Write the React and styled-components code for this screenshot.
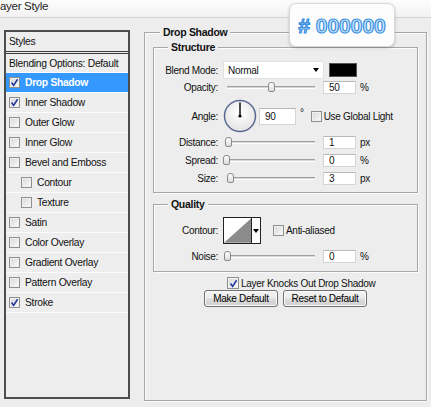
import React from 'react';
import styled, { createGlobalStyle } from 'styled-components';

const GlobalStyle = createGlobalStyle`
  * { box-sizing: border-box; }
  html, body { margin: 0; padding: 0; background: #ededed; }
  body {
    font-family: 'Liberation Sans', Arial, sans-serif;
    font-size: 10px;
    letter-spacing: -0.3px;
    color: #111;
  }
`;

const Window = styled.div`
  position: relative;
  width: 431px;
  height: 407px;
  overflow: hidden;
  background: #ededed;
`;

const TitleBar = styled.div`
  height: 18px;
  border-bottom: 1px solid #d2d2d2;
  background: linear-gradient(#fdfdfd, #f2f2f2);
  font-size: 11.5px;
  line-height: 13px;
  color: #1e1e1e;
`;

const Badge = styled.div`
  position: absolute;
  top: 3px;
  left: 289px;
  width: 106px;
  height: 44px;
  border: 1px solid #d9d9d9;
  border-radius: 7px;
  background: #fdfdfd;
  box-shadow: 0 1px 3px rgba(0, 0, 0, 0.22);
  display: flex;
  align-items: center;
  justify-content: center;
  font-size: 21px;
  font-weight: bold;
  letter-spacing: 0;
  color: #cde7fb;
  -webkit-text-stroke: 1.2px #3a8fe0;
  padding-top: 2px;
`;

const Body = styled.div`
  display: flex;
  align-items: flex-start;
  padding-left: 4px;
`;

const StylesPanel = styled.div`
  margin-top: 12px;
  width: 126px;
  height: 369px;
  border: 2px solid #4c4c4c;
  background: #eeeeee;
  display: flex;
  flex-direction: column;
  font-size: 10.3px;
`;

const PanelHeader = styled.div`
  height: 22px;
  line-height: 19px;
  padding-left: 3px;
  border-bottom: 3px double #3a3a3a;
`;

const PanelItem = styled.div`
  display: flex;
  align-items: center;
  gap: 3px;
  height: ${p => p.$h || 20}px;
  padding-left: ${p => (p.$indent ? 15 : 3)}px;
  border-bottom: 1px solid #fbfbfb;
  background: ${p => (p.$active ? '#3399ff' : 'transparent')};
  color: ${p => (p.$active ? '#fff' : '#111')};
  font-weight: ${p => (p.$active ? 'bold' : 'normal')};
`;

const Main = styled.div`
  margin-left: 14px;
  margin-top: 14px;
`;

const Group = styled.div`
  border: 1px solid #a7a7a7;
  box-shadow: inset 1px 1px 0 #fbfbfb, 1px 1px 0 #fbfbfb;
  width: ${p => p.$w}px;
  height: ${p => (p.$h ? `${p.$h}px` : 'auto')};
  margin-top: ${p => p.$mt || 0}px;
  padding: 0 ${p => p.$pad || 0}px ${p => p.$pb || 0}px;
`;

const Legend = styled.div`
  width: fit-content;
  margin-top: -7px;
  margin-left: ${p => p.$indent}px;
  padding: 0 3px;
  line-height: 12px;
  background: #ededed;
  font-weight: bold;
  font-size: 10.5px;
`;

const Rows = styled.div`
  display: flex;
  flex-direction: column;
  padding-top: 7px;
`;

const Row = styled.div`
  display: flex;
  align-items: center;
  height: ${p => p.$h}px;
  margin-top: ${p => p.$mt || 0}px;
`;

const Label = styled.span`
  width: 64px;
  margin-right: 5px;
  text-align: right;
  flex-shrink: 0;
`;

const Select = styled.div`
  display: flex;
  align-items: center;
  justify-content: space-between;
  width: 101px;
  height: 18px;
  padding: 0 4px 0 4px;
  background: #fff;
  border: 1px solid #e2e2e2;
`;

const Caret = styled.span`
  width: 0;
  height: 0;
  border-left: 3px solid transparent;
  border-right: 3px solid transparent;
  border-top: 4px solid #000;
`;

const Swatch = styled.div`
  width: 28px;
  height: 14px;
  margin-left: 5px;
  background: #000;
  border: 1px solid #555;
`;

const Slider = styled.div`
  position: relative;
  width: 95px;
  height: 12px;
  display: flex;
  align-items: center;
  padding: 0 3px 0 4px;
`;

const Track = styled.div`
  flex: 1;
  height: 3px;
  background: #d6d6d6;
  border-top: 1px solid #a0a0a0;
  border-bottom: 1px solid #fff;
`;

const Thumb = styled.div`
  position: absolute;
  top: 1px;
  width: 7px;
  height: 10px;
  border: 1px solid #8a8a8a;
  border-radius: 3px 3px 2px 2px;
  background: linear-gradient(#ffffff, #dcdcdc);
`;

const NumberBox = styled.div`
  width: ${p => p.$w || 33}px;
  height: ${p => p.$h || 13}px;
  margin-left: ${p => (p.$ml === undefined ? 5 : p.$ml)}px;
  padding-left: 5px;
  display: flex;
  align-items: center;
  background: #fff;
  border: 1px solid #d4d4d4;
  border-top-color: #b8b8b8;
`;

const Unit = styled.span`
  margin-left: 4px;
  margin-bottom: ${p => p.$raise || 0}px;
`;

const CheckBox = styled.span`
  display: inline-flex;
  align-items: center;
  justify-content: center;
  flex-shrink: 0;
  width: ${p => p.$size || 11}px;
  height: ${p => p.$size || 11}px;
  margin-left: ${p => p.$ml || 0}px;
  margin-right: 2px;
  border: 1px solid #8e8f8f;
  background: linear-gradient(135deg, #d6d6d6, #fbfbfb);
  box-shadow: inset 0 0 0 1px #f1f1f1;
`;

const ContourBox = styled.div`
  display: flex;
  width: 38px;
  height: 27px;
  border: 1px solid #222;
  background: #fff;
`;

const ContourArrow = styled.div`
  width: 9px;
  border-left: 1px solid #222;
  display: flex;
  align-items: center;
  justify-content: center;
`;

const KnockRow = styled.div`
  display: flex;
  align-items: center;
  height: 12px;
  margin-top: 5px;
  margin-left: 74px;
`;

const Buttons = styled.div`
  display: flex;
  justify-content: center;
  gap: 5px;
  margin-top: 1px;
`;

const Button = styled.button`
  width: ${p => p.$w}px;
  height: 17px;
  padding: 0;
  font-family: inherit;
  font-size: 10px;
  letter-spacing: -0.3px;
  color: #000;
  border: 1px solid #707070;
  border-radius: 3px;
  background: linear-gradient(#f3f3f3, #ebebeb 48%, #dddddd 52%, #cfcfcf);
  box-shadow: inset 0 0 0 1px #fafafa;
`;

const Check = ({ checked, size, ml }) => (
  <CheckBox $size={size} $ml={ml}>
    {checked && (
      <svg width="9" height="9" viewBox="0 0 9 9">
        <path d="M1.5 4.6 L3.6 7.4 L7.6 1.2" fill="none" stroke="#22389a" strokeWidth="1.6" />
      </svg>
    )}
  </CheckBox>
);

const SliderControl = ({ pos }) => (
  <Slider>
    <Track />
    <Thumb style={{ left: pos }} />
  </Slider>
);

const Dial = () => (
  <svg width="34" height="34" viewBox="0 0 34 34">
    <defs>
      <radialGradient id="dialFill" cx="50%" cy="40%" r="60%">
        <stop offset="0%" stopColor="#ffffff" />
        <stop offset="100%" stopColor="#e4e4e4" />
      </radialGradient>
    </defs>
    <circle cx="17" cy="17" r="15.5" fill="url(#dialFill)" stroke="#5b6b90" strokeWidth="1.5" />
    <line x1="17" y1="17" x2="17" y2="3.5" stroke="#000" strokeWidth="1.4" />
    <circle cx="17" cy="17" r="1.6" fill="#000" />
  </svg>
);

const styleItems = [
  { label: 'Drop Shadow', checked: true, active: true },
  { label: 'Inner Shadow', checked: true },
  { label: 'Outer Glow' },
  { label: 'Inner Glow' },
  { label: 'Bevel and Emboss' },
  { label: 'Contour', indent: true },
  { label: 'Texture', indent: true },
  { label: 'Satin' },
  { label: 'Color Overlay' },
  { label: 'Gradient Overlay' },
  { label: 'Pattern Overlay' },
  { label: 'Stroke', checked: true },
];

export default function App() {
  return (
    <>
      <GlobalStyle />
      <Window>
        <TitleBar>ayer Style</TitleBar>
        <Badge># 000000</Badge>
        <Body>
          <StylesPanel>
            <PanelHeader>Styles</PanelHeader>
            <PanelItem $h={19}>Blending Options: Default</PanelItem>
            {styleItems.map(item => (
              <PanelItem key={item.label} $indent={item.indent} $active={item.active}>
                <Check checked={item.checked} />
                {item.label}
              </PanelItem>
            ))}
          </StylesPanel>

          <Main>
            <Group $w={283} $h={369} $pad={8}>
              <Legend $indent={7}>Drop Shadow</Legend>

              <Group $w={265} $mt={9} $pb={5}>
                <Legend $indent={14}>Structure</Legend>
                <Rows>
                  <Row $h={20}>
                    <Label>Blend Mode:</Label>
                    <Select>
                      <span>Normal</span>
                      <Caret />
                    </Select>
                    <Swatch />
                  </Row>
                  <Row $h={14}>
                    <Label>Opacity:</Label>
                    <SliderControl pos={45} />
                    <NumberBox>50</NumberBox>
                    <Unit>%</Unit>
                  </Row>
                  <Row $h={34} $mt={5}>
                    <Label>Angle:</Label>
                    <Dial />
                    <NumberBox $w={37} $h={17} $ml={2}>90</NumberBox>
                    <Unit $raise={7}>°</Unit>
                    <Check ml={7} />
                    Use Global Light
                  </Row>
                  <Row $h={18}>
                    <Label>Distance:</Label>
                    <SliderControl pos={2} />
                    <NumberBox>1</NumberBox>
                    <Unit>px</Unit>
                  </Row>
                  <Row $h={18}>
                    <Label>Spread:</Label>
                    <SliderControl pos={0} />
                    <NumberBox>0</NumberBox>
                    <Unit>%</Unit>
                  </Row>
                  <Row $h={18}>
                    <Label>Size:</Label>
                    <SliderControl pos={4} />
                    <NumberBox>3</NumberBox>
                    <Unit>px</Unit>
                  </Row>
                </Rows>
              </Group>

              <Group $w={265} $mt={11} $pb={7}>
                <Legend $indent={14}>Quality</Legend>
                <Rows>
                  <Row $h={27}>
                    <Label>Contour:</Label>
                    <ContourBox>
                      <svg width="28" height="25" viewBox="0 0 28 25">
                        <polygon points="0,25 28,0 28,25" fill="#8c8c8c" />
                      </svg>
                      <ContourArrow>
                        <Caret />
                      </ContourArrow>
                    </ContourBox>
                    <Check ml={12} />
                    Anti-aliased
                  </Row>
                  <Row $h={16} $mt={4}>
                    <Label>Noise:</Label>
                    <SliderControl pos={1} />
                    <NumberBox>0</NumberBox>
                    <Unit>%</Unit>
                  </Row>
                </Rows>
              </Group>

              <KnockRow>
                <Check checked size={12} />
                Layer Knocks Out Drop Shadow
              </KnockRow>
              <Buttons>
                <Button $w={74}>Make Default</Button>
                <Button $w={84}>Reset to Default</Button>
              </Buttons>
            </Group>
          </Main>
        </Body>
      </Window>
    </>
  );
}
